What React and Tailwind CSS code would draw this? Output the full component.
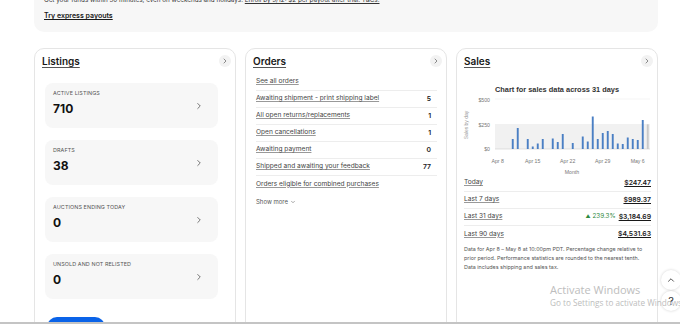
import { ChevronRight, ChevronDown, ChevronUp } from 'lucide-react'

const sans = { fontFamily: 'Inter, "Open Sans", Arial, sans-serif' }

const tiles = [
  { label: 'Active listings', value: '710' },
  { label: 'Drafts', value: '38' },
  { label: 'Auctions ending today', value: '0' },
  { label: 'Unsold and not relisted', value: '0' },
]

const orders = [
  { label: 'See all orders' },
  { label: 'Awaiting shipment - print shipping label', count: '5' },
  { label: 'All open returns/replacements', count: '1' },
  { label: 'Open cancellations', count: '1' },
  { label: 'Awaiting payment', count: '0' },
  { label: 'Shipped and awaiting your feedback', count: '77' },
  { label: 'Orders eligible for combined purchases', last: true },
]

const sales = [
  { label: 'Today', value: '$247.47' },
  { label: 'Last 7 days', value: '$989.37' },
  { label: 'Last 31 days', value: '$3,184.69', change: '239.3%' },
  { label: 'Last 90 days', value: '$4,531.63', last: true },
]

// daily sales, Apr 8 - May 8
const days = [0, 0, 0, 100, 210, 0, 100, 25, 55, 100, 0, 105, 70, 150, 0, 60, 0, 125, 75, 325, 100, 160, 180, 150, 55, 50, 115, 100, 90, 290, 247]

function CardHeader({ title }) {
  return (
    <div className="flex items-center justify-between pl-[7px] pr-[4px] pt-[5px]">
      <span className="text-[10px] leading-[14px] font-semibold text-[#191919] underline underline-offset-2 decoration-[#555]">{title}</span>
      <span className="w-[12px] h-[12px] rounded-full bg-[#f2f2f2] flex items-center justify-center text-[#555]">
        <ChevronRight size={8} strokeWidth={2} />
      </span>
    </div>
  )
}

function SalesChart() {
  const y = v => 66 - v * 0.1
  return (
    <svg width="194" height="92" className="block ml-[3px]" style={{ fontFamily: '"Liberation Sans", Arial, sans-serif' }}>
      <text x="97" y="9" textAnchor="middle" fontSize="7.4" fontWeight="600" fill="#333">Chart for sales data across 31 days</text>
      <line x1="35" x2="190" y1="16" y2="16" stroke="#eee" strokeWidth="0.6" />
      <rect x="35" y="41" width="155" height="25" fill="#f1f1f1" />
      <line x1="35" x2="190" y1="66" y2="66" stroke="#ccc" strokeWidth="0.6" />
      <text x="30" y="19" textAnchor="end" fontSize="5.2" fill="#777">$500</text>
      <text x="30" y="44" textAnchor="end" fontSize="5.2" fill="#777">$250</text>
      <text x="30" y="68" textAnchor="end" fontSize="5.2" fill="#777">$0</text>
      <text x="8" y="42" textAnchor="middle" fontSize="5" fill="#999" transform="rotate(-90 8 42)">Sales by day</text>
      {days.map((v, k) =>
        v > 0 ? (
          <rect key={k} x={36.8 + 5 * k} y={y(v)} width="1.9" height={66 - y(v)} fill={k === 30 ? '#c9c9c9' : '#4a7fc4'} />
        ) : null
      )}
      {['Apr 8', 'Apr 15', 'Apr 22', 'Apr 29', 'May 6'].map((d, i) => (
        <text key={d} x={37.7 + 35 * i} y="80" textAnchor="middle" fontSize="5.2" fill="#777">{d}</text>
      ))}
      <text x="112" y="91" textAnchor="middle" fontSize="5.2" fill="#777">Month</text>
    </svg>
  )
}

export default function App() {
  return (
    <div className="relative w-[680px] h-[324px] overflow-hidden bg-white text-[#191919]" style={sans}>
      <div className="pl-[34px] pr-[22px]">
        {/* Express payouts banner */}
        <div className="-mt-[5px] bg-[#f7f7f7] rounded-b-[10px] pl-[10px] pb-[11px]">
          <p className="text-[6.3px] leading-[10px] text-[#333] whitespace-nowrap">
            Get your funds within 30 minutes, even on weekends and holidays.{' '}
            <span className="underline">Enroll by 5/12: $2 per payout after trial. T&amp;Cs.</span>
          </p>
          <p className="mt-[6px] text-[7px] leading-[10px] font-semibold underline">Try express payouts</p>
        </div>

        <div className="mt-[16px] grid grid-cols-3 gap-[9px]">
          {/* Listings */}
          <div className="h-[300px] border border-[#e5e5e5] rounded-[10px]">
            <CardHeader title="Listings" />
            <div className="mt-[15px] ml-[10px] mr-[17px] flex flex-col gap-[12px]">
              {tiles.map(t => (
                <div key={t.label} className="h-[45px] bg-[#f7f7f7] rounded-[8px] pl-[8px] pr-[14px] flex items-center justify-between">
                  <div className="self-start pt-[6px]">
                    <p className="text-[5.4px] leading-[8px] uppercase text-[#555] tracking-[0.02em]">{t.label}</p>
                    <p className="mt-[5px] text-[12px] leading-[14px] font-bold text-[#111]">{t.value}</p>
                  </div>
                  <ChevronRight size={10} strokeWidth={1.6} className="text-[#333]" />
                </div>
              ))}
            </div>
            <div className="mt-[18px] ml-[12px] w-[58px] h-[20px] rounded-full bg-[#0a63e8]" />
          </div>

          {/* Orders */}
          <div className="h-[300px] border border-[#e5e5e5] rounded-[10px]">
            <CardHeader title="Orders" />
            <div className="mt-[6px] ml-[10px] mr-[9px]">
              {orders.map(o => (
                <div key={o.label} className={`h-[17px] flex items-center justify-between pr-[6px] ${o.last ? '' : 'border-b border-[#ededed]'}`}>
                  <span className="text-[6.6px] underline decoration-[#999] text-[#444]">{o.label}</span>
                  {o.count && <span className="text-[6.8px] font-semibold text-[#191919]">{o.count}</span>}
                </div>
              ))}
              <div className="mt-[4px] flex items-center gap-[2px] text-[6px] leading-[10px] text-[#555]">
                Show more <ChevronDown size={6} strokeWidth={2} />
              </div>
            </div>
          </div>

          {/* Sales */}
          <div className="h-[300px] border border-[#e5e5e5] rounded-[10px]">
            <CardHeader title="Sales" />
            <div className="mt-[15px]">
              <SalesChart />
            </div>
            <div className="ml-[7px] mr-[6px]">
              {sales.map(s => (
                <div key={s.label} className={`h-[17px] flex items-center justify-between ${s.last ? '' : 'border-b border-[#ededed]'}`}>
                  <span className="text-[6.6px] underline decoration-[#999] text-[#444]">{s.label}</span>
                  <span className="flex items-center gap-[3px]">
                    {s.change && (
                      <span className="text-[6.3px] text-[#2d8a3e] flex items-center gap-[2px]">
                        <span className="text-[5px]">▲</span>{s.change}
                      </span>
                    )}
                    <span className="text-[6.8px] font-semibold underline text-[#191919]">{s.value}</span>
                  </span>
                </div>
              ))}
              <p className="mt-[2px] text-[5.4px] leading-[9px] text-[#555]">
                Data for Apr 8 – May 8 at 10:00pm PDT. Percentage change relative to prior period. Performance statistics are rounded to the nearest tenth. Data includes shipping and sales tax.
              </p>
            </div>
          </div>
        </div>
      </div>

      {/* floating buttons */}
      <div className="absolute left-[661px] top-[270px] flex flex-col gap-[1px]">
        <span className="w-[20px] h-[20px] rounded-full bg-white shadow-[0_0_3px_rgba(0,0,0,0.18)] flex items-center justify-center text-[#333]">
          <ChevronUp size={10} strokeWidth={2} />
        </span>
        <span className="w-[20px] h-[20px] rounded-full bg-white shadow-[0_0_3px_rgba(0,0,0,0.18)] flex items-center justify-center text-[11px] text-[#333]">?</span>
      </div>

      {/* Windows activation watermark */}
      <div className="absolute left-[550px] top-[282px] pointer-events-none text-[#bdbdbd] whitespace-nowrap" style={{ fontFamily: '"Open Sans", sans-serif' }}>
        <p className="text-[11px] leading-[15px]">Activate Windows</p>
        <p className="text-[8.2px] leading-[12px]">Go to Settings to activate Windows.</p>
      </div>

      <div className="absolute left-0 right-0 bottom-0 h-[2px] bg-[#c4c4c4]" />
    </div>
  )
}
